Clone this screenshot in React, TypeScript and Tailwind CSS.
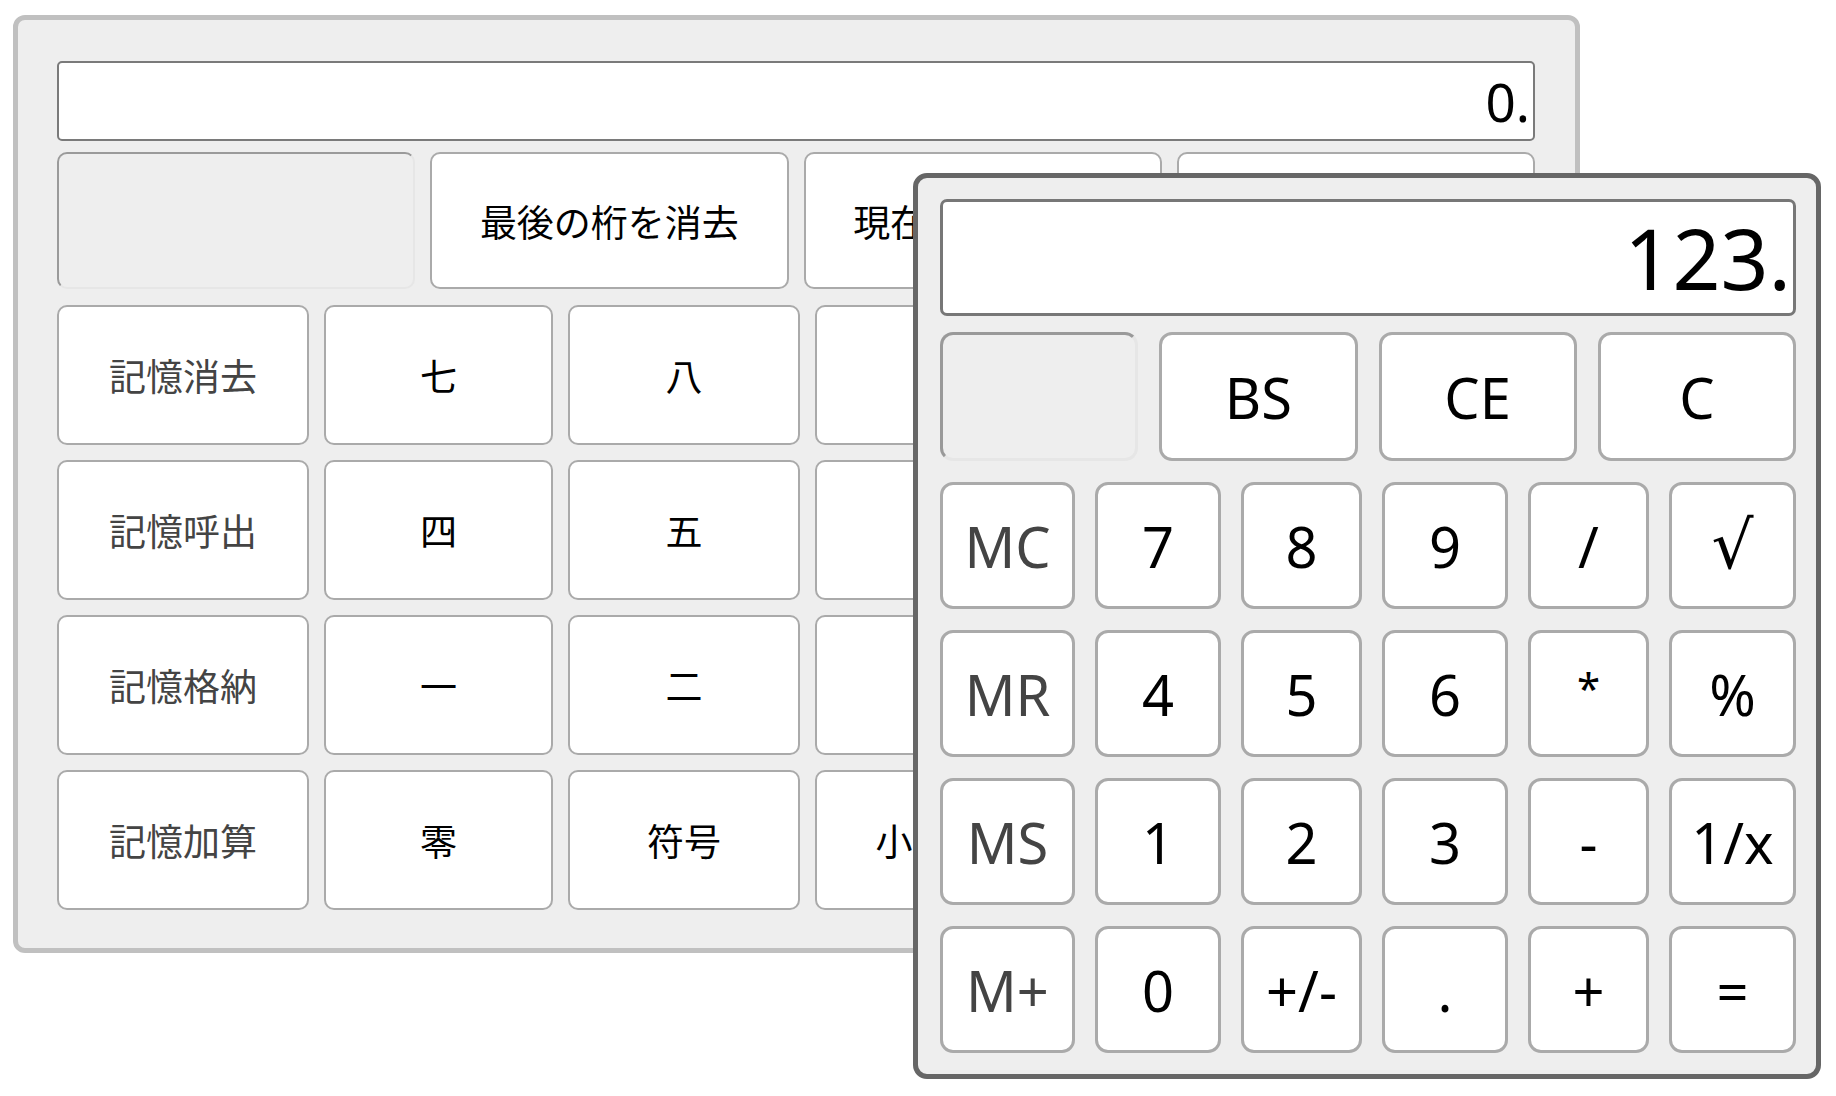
import React from "react";

type KeyDef = { label: string; memory?: boolean; size?: string };

// labels of the back keys that sit fully under the front window are left blank
const backTop = ["最後の桁を消去", "現在の値を消去", ""];

const backRows: KeyDef[][] = [
  [{ label: "記憶消去", memory: true }, { label: "七" }, { label: "八" }, { label: "" }, { label: "" }, { label: "" }],
  [{ label: "記憶呼出", memory: true }, { label: "四" }, { label: "五" }, { label: "" }, { label: "" }, { label: "" }],
  [{ label: "記憶格納", memory: true }, { label: "一" }, { label: "二" }, { label: "" }, { label: "" }, { label: "" }],
  [{ label: "記憶加算", memory: true }, { label: "零" }, { label: "符号" }, { label: "小数点" }, { label: "" }, { label: "" }],
];

const frontTop = ["BS", "CE", "C"];

const frontRows: KeyDef[][] = [
  [{ label: "MC", memory: true }, { label: "7" }, { label: "8" }, { label: "9" }, { label: "/" }, { label: "√", size: "text-[66px] font-['DejaVu_Sans',sans-serif]" }],
  [{ label: "MR", memory: true }, { label: "4" }, { label: "5" }, { label: "6" }, { label: "*", size: "text-[42px] pb-[12px]" }, { label: "%" }],
  [{ label: "MS", memory: true }, { label: "1" }, { label: "2" }, { label: "3" }, { label: "-" }, { label: "1/x" }],
  [{ label: "M+", memory: true }, { label: "0" }, { label: "+/-" }, { label: "." }, { label: "+" }, { label: "=" }],
];

function BackCalculator() {
  return (
    <div className="w-[1567px] h-[938px] rounded-[12px] border-[5px] border-[#c0c0c0] bg-[#eeeeee] pl-[39px] pr-[40px] pt-[41px]">
      {/* display */}
      <div className="h-[80px] rounded-[5px] border-2 border-[#7a7a7a] bg-white flex items-center justify-end pr-[3px] text-[53px] leading-none text-black">
        0.
      </div>

      {/* clear row */}
      <div className="mt-[11px] grid grid-cols-4 gap-x-[15px] h-[137px]">
        <div className="rounded-[10px] border-2 border-t-[#9a9a9a] border-l-[#9a9a9a] border-r-[#e6e6e6] border-b-[#e6e6e6] bg-[#eeeeee]" />
        {backTop.map((t, i) => (
          <div key={i} className="rounded-[10px] border-2 border-[#aaaaaa] bg-white flex items-center justify-center pt-[4px] text-[37px] text-black">
            {t}
          </div>
        ))}
      </div>

      {/* number rows */}
      <div className="mt-[16px] flex flex-col gap-y-[15px]">
        {backRows.map((row, i) => (
          <div key={i} className="grid grid-cols-[252px_229px_232px_232px_226px_232px] gap-x-[15px] h-[140px]">
            {row.map((k, j) => (
              <div
                key={j}
                className={`rounded-[10px] border-2 border-[#aaaaaa] bg-white flex items-center justify-center pt-[4px] text-[37px] ${k.memory ? "text-[#444444]" : "text-black"}`}
              >
                {k.label}
              </div>
            ))}
          </div>
        ))}
      </div>
    </div>
  );
}

function FrontCalculator() {
  return (
    <div className="absolute left-[913px] top-[173px] w-[908px] h-[906px] rounded-[14px] border-[5px] border-[#666666] bg-[#eeeeee] pl-[22px] pr-[20px] pt-[21px]">
      {/* display */}
      <div className="h-[117px] rounded-[7px] border-[3px] border-[#777777] bg-white flex items-center justify-end pr-[2px] text-[84px] leading-none text-black">
        123.
      </div>

      {/* clear row */}
      <div className="mt-[16px] grid grid-cols-4 gap-x-[21px] h-[129px]">
        <div className="rounded-[13px] border-[3px] border-t-[#999999] border-l-[#999999] border-r-[#e6e6e6] border-b-[#e6e6e6] bg-[#eeeeee]" />
        {frontTop.map((t) => (
          <div key={t} className="rounded-[13px] border-[3px] border-[#aaaaaa] bg-white flex items-center justify-center text-[56px] leading-none text-black">
            {t}
          </div>
        ))}
      </div>

      {/* number rows */}
      <div className="mt-[21px] flex flex-col gap-y-[21px]">
        {frontRows.map((row, i) => (
          <div key={i} className="grid grid-cols-[135px_126px_121px_126px_121px_127px] gap-x-[20px] h-[127px]">
            {row.map((k) => (
              <div
                key={k.label}
                className={`rounded-[13px] border-[3px] border-[#aaaaaa] bg-white flex items-center justify-center leading-none ${k.memory ? "text-[#444444]" : "text-black"} ${k.size ?? "text-[56px]"}`}
              >
                {k.label}
              </div>
            ))}
          </div>
        ))}
      </div>
    </div>
  );
}

export default function App() {
  return (
    <div className="relative w-[1836px] h-[1096px] bg-white pl-[13px] pt-[15px] font-['Noto_Sans','Noto_Sans_CJK_JP',sans-serif]">
      <BackCalculator />
      <FrontCalculator />
    </div>
  );
}
